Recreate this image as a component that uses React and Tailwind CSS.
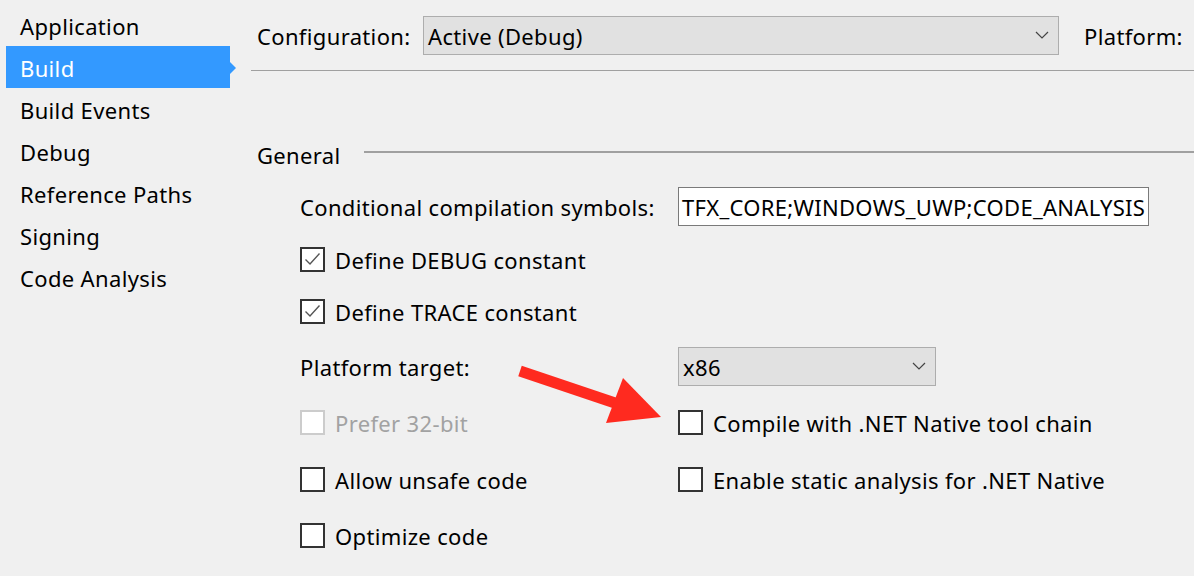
import React from 'react';

const navItems = ["Application", "Build", "Build Events", "Debug", "Reference Paths", "Signing", "Code Analysis"];

const Chevron = () => (
    <svg width="14" height="8" viewBox="0 0 14 8" className="shrink-0">
        <path d="M1 1 L7 7 L13 1" fill="none" stroke="#444" strokeWidth="1.2" />
    </svg>
);

const Label = ({ children, className = '' }) => (
    <span className={`pt-[2px] ${className}`}>{children}</span>
);

const CheckBox = ({ label, checked, disabled }) => (
    <div className="flex items-center gap-[10px]">
        <div className={`w-[25px] h-[25px] border-2 bg-white flex items-center justify-center ${disabled ? 'border-[#cccccc]' : 'border-[#333333]'}`}>
            {checked && (
                <svg width="17" height="14" viewBox="0 0 17 14">
                    <path d="M1.5 7.5 L6 12 L15.5 1.5" fill="none" stroke="#555" strokeWidth="1.4" />
                </svg>
            )}
        </div>
        <Label className={disabled ? 'text-[#a2a2a2]' : 'text-black'}>{label}</Label>
    </div>
);

const App = () => {
    return (
        <div className="relative flex h-[576px] w-[1194px] overflow-hidden bg-[#f0f0f0] text-[22px] leading-none tracking-[0.35px] text-black" style={{ fontFamily: '"Noto Sans", sans-serif' }}>
            {/* Left nav */}
            <div className="w-[230px] shrink-0 pt-[4px] pl-[6px]">
                {navItems.map(item => (
                    <div
                        key={item}
                        className={`relative h-[42px] flex items-center pl-[14px] ${item === 'Build' ? 'bg-[#3399ff] text-white' : ''}`}
                    >
                        <Label>{item}</Label>
                        {item === 'Build' && (
                            <div className="absolute right-[-6px] top-[16px] w-0 h-0 border-y-[6px] border-y-transparent border-l-[6px] border-l-[#3399ff]" />
                        )}
                    </div>
                ))}
            </div>

            {/* Main panel */}
            <div className="flex-1 pl-[21px]">
                <div className="flex items-center h-[71px] pt-[16px] pb-[16px] border-b border-[#a0a0a0] pl-[6px] whitespace-nowrap">
                    <Label className="w-[166px]">Configuration:</Label>
                    <div className="w-[636px] h-[39px] bg-[#e1e1e1] border border-[#adadad] flex items-center justify-between pl-[4px] pr-[9px]">
                        <Label>Active (Debug)</Label>
                        <Chevron />
                    </div>
                    <Label className="ml-[25px]">Platform:</Label>
                </div>

                <div className="flex items-center h-[30px] mt-[68px] pl-[6px]">
                    <Label>General</Label>
                    <div className="flex-1 h-[2px] bg-[#a0a0a0] ml-[23px] -mt-[5px]" />
                </div>

                <div className="pl-[49px]">
                    <div className="flex items-center h-[40px] mt-[17px]">
                        <Label className="w-[378px]">Conditional compilation symbols:</Label>
                        <div className="w-[471px] h-[39px] bg-white border border-[#7a7a7a] flex items-center pl-[3px] whitespace-nowrap overflow-hidden tracking-[0.3px]">
                            <Label>TFX_CORE;WINDOWS_UWP;CODE_ANALYSIS</Label>
                        </div>
                    </div>
                    <div className="flex items-center h-[40px] mt-[13px]">
                        <CheckBox label="Define DEBUG constant" checked />
                    </div>
                    <div className="flex items-center h-[40px] mt-[12px]">
                        <CheckBox label="Define TRACE constant" checked />
                    </div>
                    <div className="flex items-center h-[40px] mt-[15px]">
                        <Label className="w-[378px]">Platform target:</Label>
                        <div className="w-[258px] h-[39px] bg-[#e1e1e1] border border-[#adadad] flex items-center justify-between pl-[4px] pr-[9px]">
                            <Label>x86</Label>
                            <Chevron />
                        </div>
                    </div>
                    <div className="flex items-center h-[40px] mt-[16px]">
                        <div className="w-[378px]"><CheckBox label="Prefer 32-bit" disabled /></div>
                        <CheckBox label="Compile with .NET Native tool chain" />
                    </div>
                    <div className="flex items-center h-[40px] mt-[17px]">
                        <div className="w-[378px]"><CheckBox label="Allow unsafe code" /></div>
                        <CheckBox label="Enable static analysis for .NET Native" />
                    </div>
                    <div className="flex items-center h-[40px] mt-[16px]">
                        <CheckBox label="Optimize code" />
                    </div>
                </div>
            </div>

            {/* Red annotation arrow */}
            <svg className="absolute left-0 top-0 pointer-events-none" width="1194" height="576">
                <line x1="520" y1="371" x2="618" y2="404" stroke="#ff2a1f" strokeWidth="11" />
                <polygon points="623,378 606,423 661,417" fill="#ff2a1f" />
            </svg>
        </div>
    );
};

export default App;
